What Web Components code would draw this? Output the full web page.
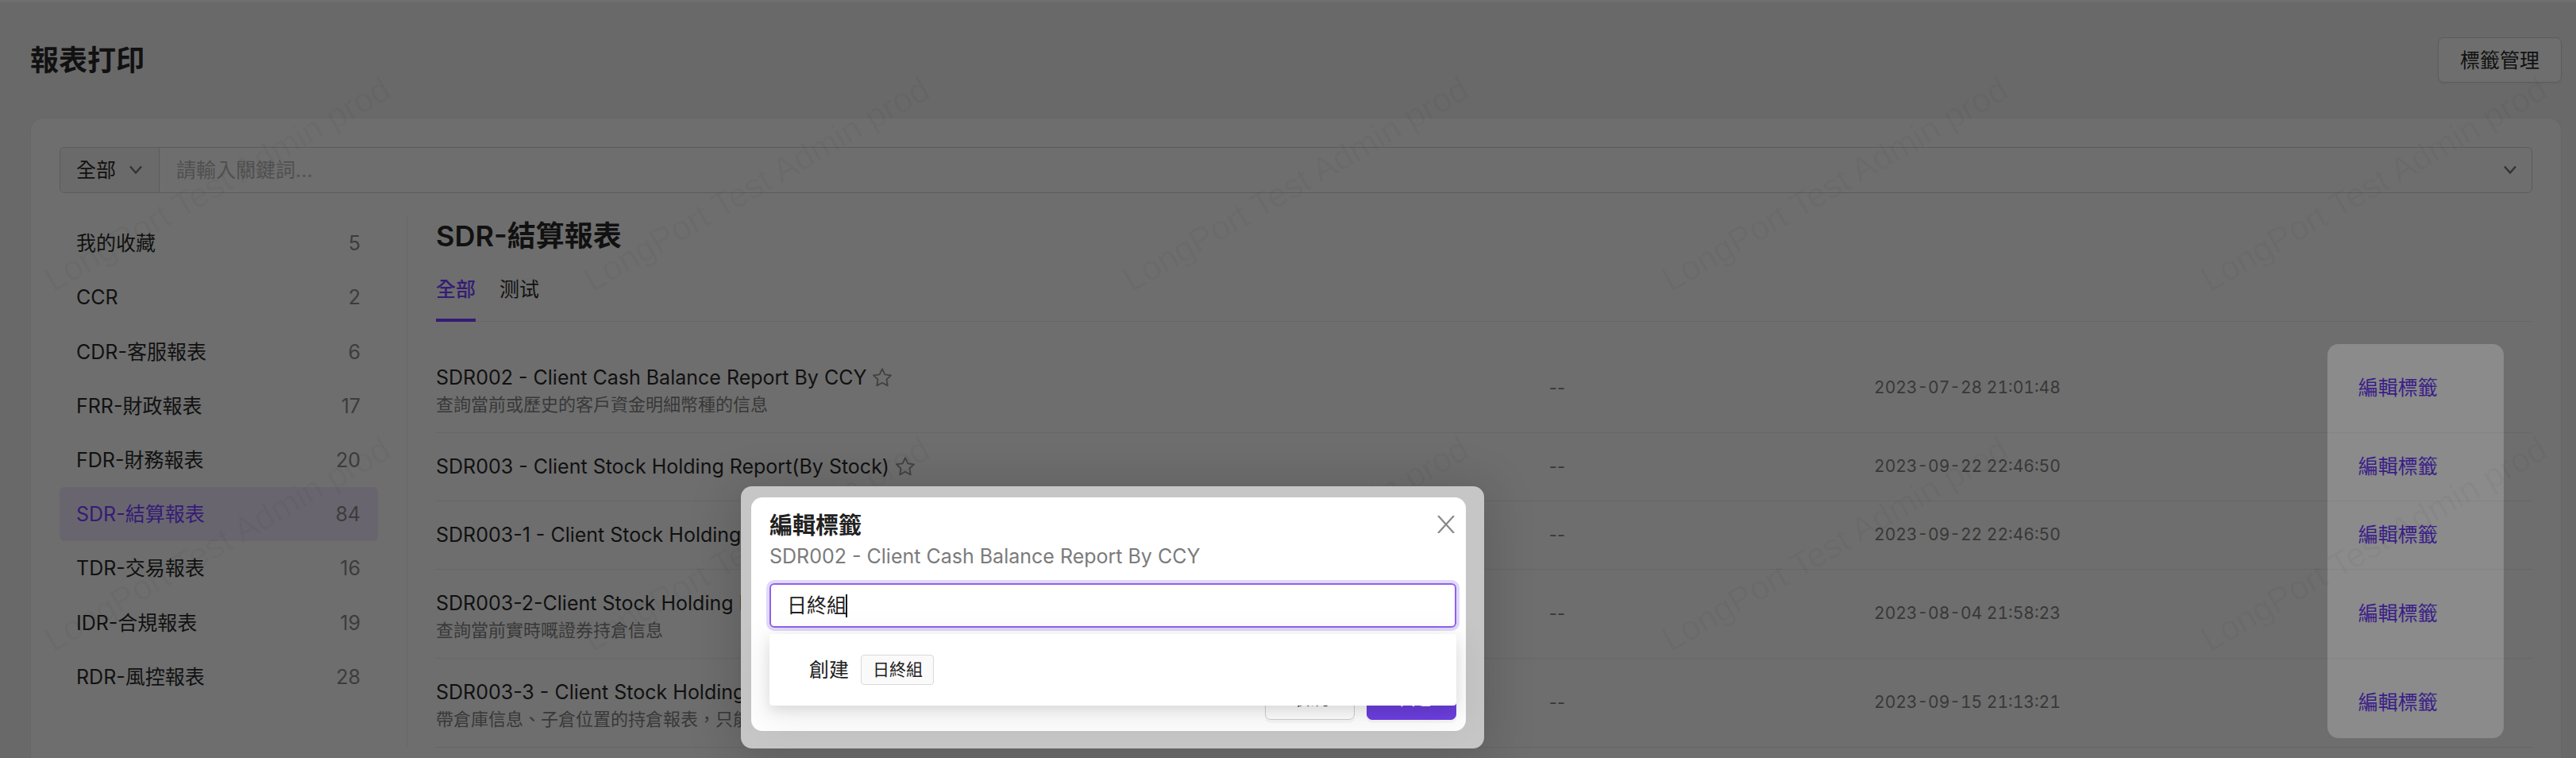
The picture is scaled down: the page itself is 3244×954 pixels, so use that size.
<!DOCTYPE html>
<html lang="zh-Hant">
<head>
<meta charset="utf-8">
<meta name="viewport" content="width=device-width, initial-scale=1">
<title>報表打印</title>
<style>
:root{
  --page:#696969; --card:#6e6e6e; --line:#666; --edge:#5b5b5b;
  --ink:#111; --muted:#383838; --hint:#505050; --brand:#341c75;
}
html,body{margin:0;height:100%}
body{font:25px/38px Inter,"Noto Sans CJK TC","Noto Sans CJK SC",sans-serif;color:var(--ink);background:var(--page);overflow:hidden}
</style>
</head>
<body>
<report-page>
  <page-header slot="header" heading="報表打印"><span slot="action">標籤管理</span></page-header>
  <search-bar slot="search"></search-bar>
  <report-menu slot="menu"></report-menu>
  <report-list slot="list" heading="SDR-結算報表"></report-list>
  <water-mark slot="overlay" text="LongPort Test Admin prod"></water-mark>
  <tag-dialog slot="overlay" heading="編輯標籤" report="SDR002 - Client Cash Balance Report By CCY"></tag-dialog>
</report-page>
<script>
const reset = `:host,*{box-sizing:border-box}button,input,select{font:inherit;color:inherit;margin:0;border:0;background:none;padding:0;outline:0}a{color:inherit;text-decoration:none}`;
const define = (name, render) => customElements.define(name, class extends HTMLElement {
  constructor(){
    super();
    this.attachShadow({mode:'open'});
  }
  connectedCallback(){
    this.shadowRoot.innerHTML = '<style>' + reset + '</style>' + render(this);
  }
});

define('report-page', () => `
<style>
:host{display:flex;flex-direction:column;position:relative;height:100vh;overflow:hidden;padding:0 18px 0 38px;border-top:3px solid #6f6f6f}
main{flex:1 0 auto;background:var(--card);border:1px solid #666;border-bottom:0;border-radius:16px 16px 0 0;padding:36px 36px 0}
.cols{display:grid;grid-template-columns:437px 1fr;margin-top:29px}
</style>
<slot name="header"></slot>
<main><slot name="search"></slot><div class="cols"><slot name="menu"></slot><slot name="list"></slot></div></main>
<slot name="overlay"></slot>`);

define('page-header', el => `
<style>
:host{display:flex;align-items:center;justify-content:space-between;height:145px;flex:none}
h1{margin:0;font-size:36px;line-height:50px;font-weight:600}
button{height:57px;padding:0 27px;border:1px solid var(--edge);border-radius:7px;background:var(--card);box-shadow:0 2px 2px rgba(0,0,0,.03)}
</style>
<h1>${el.getAttribute('heading')}</h1><button type="button"><slot name="action"></slot></button>`);

const chevron = `<svg width="18" height="12" viewBox="0 0 18 12" fill="none" stroke="#333" stroke-width="2.4" aria-hidden="true"><path d="M2 1.5 9 9.5 16 1.5"/></svg>`;

define('search-bar', () => `
<style>
:host{display:flex;height:58px;border:1px solid var(--edge);border-radius:6px;overflow:hidden}
.scope{display:flex;align-items:center;gap:16px;padding:0 20px;background:#6a6a6a;border-right:1px solid var(--edge);flex:none}
select{appearance:none;width:50px}
input{flex:1;min-width:0;padding:0 21px}
input::placeholder{color:var(--hint);opacity:1}
button{display:flex;align-items:center;padding:0 18px}
</style>
<label class="scope"><select aria-label="範圍"><option>全部</option></select>${chevron}</label>
<input type="text" aria-label="關鍵詞" placeholder="請輸入關鍵詞...">
<button type="button" aria-label="展開">${chevron}</button>`);

const groups = [['我的收藏',5],['CCR',2],['CDR-客服報表',6],['FRR-財政報表',17],['FDR-財務報表',20],['SDR-結算報表',84],['TDR-交易報表',16],['IDR-合規報表',19],['RDR-風控報表',28]];
define('report-menu', () => `
<style>
:host{display:block;padding-right:36px}
nav{display:grid;grid-auto-rows:1fr;height:614px}
a{display:flex;align-items:center;justify-content:space-between;padding:0 22px 0 21px;border-radius:6px}
a span{color:#3c3c3c}
a.on{background:#69656f;color:var(--brand)}
</style>
<nav>${groups.map(([n,c]) => `<a href="#${n}"${n.startsWith('SDR') ? ' class="on" aria-current="page"' : ''}>${n}<span>${c}</span></a>`).join('')}</nav>`);

const reports = [
  ['SDR002 - Client Cash Balance Report By CCY','查詢當前或歷史的客戶資金明細幣種的信息','2023-07-28 21:01:48'],
  ['SDR003 - Client Stock Holding Report(By Stock)','','2023-09-22 22:46:50'],
  ['SDR003-1 - Client Stock Holding','','2023-09-22 22:46:50'],
  ['SDR003-2-Client Stock Holding R','查詢當前實時嘅證券持倉信息','2023-08-04 21:58:23'],
  ['SDR003-3 - Client Stock Holding','帶倉庫信息、子倉位置的持倉報表，只能','2023-09-15 21:13:21']
];
const star = `<svg width="26" height="26" viewBox="0 0 26 26" fill="none" stroke="#414141" stroke-width="1.8" stroke-linejoin="round"><path d="M13 2.2 16.3 9.3 24 10.3 18.4 15.6 19.8 23.4 13 19.7 6.2 23.4 7.6 15.6 2 10.3 9.7 9.3Z"/></svg>`;
define('report-list', el => `
<style>
:host{display:block;border-left:1px solid var(--line);padding-left:36px}
h2{margin:0;font-size:36px;line-height:50px;font-weight:600}
.tabs{display:flex;gap:30px;height:78px;margin-top:5px;box-shadow:inset 0 -1px var(--line)}
.tabs button{border-bottom:4px solid transparent}
.tabs .on{color:var(--brand);border-color:var(--brand);font-weight:500}
.rows{position:relative;margin-top:28px}
table{width:100%;table-layout:fixed;border-collapse:separate;border-spacing:0}
.name{width:53.1%}.tag{width:15.5%}.time{width:23.1%}
td{padding:23px 0 24px;border-bottom:1px solid var(--line);vertical-align:middle;white-space:nowrap;text-align:left}
.title{display:flex;align-items:center;gap:7px;height:38px}
.star{display:flex}
.desc{height:26px;font:22px/26px "Noto Sans CJK SC",sans-serif;color:var(--muted)}
.sub{font-size:22px;line-height:30px;color:var(--muted)}
.when{font-size:21px;font-variant-numeric:tabular-nums}
td:last-child{line-height:30px}
td a{color:#3a1e88}
.mark{position:absolute;top:0;right:36px;width:222px;height:496px;border-radius:14px;background:rgba(255,255,255,.2)}
td:last-child a{position:relative;z-index:1}
</style>
<h2>${el.getAttribute('heading')}</h2>
<div class="tabs" role="tablist"><button role="tab" aria-selected="true" class="on">全部</button><button role="tab" aria-selected="false">测试</button></div>
<div class="rows"><table><colgroup><col class="name"><col class="tag"><col class="time"><col></colgroup><tbody>${reports.map(([t,d,w]) => `
<tr><td><div class="title">${t}<button class="star" type="button" aria-label="收藏">${star}</button></div>${d ? `<div class="desc">${d}</div>` : ''}</td><td class="sub">--</td><td class="sub when">${w}</td><td><a href="#edit">編輯標籤</a></td></tr>`).join('')}
</tbody></table><div class="mark"></div></div>`);

define('water-mark', el => {
  let marks = '';
  for (const y of [368, 821]) for (let i = 0; i < 5; i++) marks += `<text transform="translate(${67 + i * 679} ${y}) rotate(-30)">${el.getAttribute('text')}</text>`;
  return `
<style>
:host{position:absolute;inset:-3px 0 0 0;pointer-events:none;z-index:1}
svg{display:block;width:100%;height:100%}
text{font:43px "Liberation Sans",sans-serif;fill:rgba(0,0,0,.035)}
</style>
<svg>${marks}</svg>`;
});

define('tag-dialog', el => `
<style>
:host{position:absolute;left:933px;top:609px;width:936px;padding:14px 23px 22px 13px;background:#c6c6c6;border-radius:14px;z-index:2;box-shadow:0 8px 60px 10px rgba(0,0,0,.14)}
section{position:relative;display:flex;flex-direction:column;height:294px;padding:17px 12px 14px 23px;background:#fff;border-radius:14px;color:#222}
header{display:flex;justify-content:space-between;align-items:flex-start}
h3{margin:0;font-size:29px;line-height:38px;font-weight:600}
.close{display:flex;padding:6px 2px}
p{margin:0;color:#7b7b7b}
.box{display:flex;align-items:center;height:56px;margin-top:15px;padding:0 20px;border:2px solid #8f60ee;border-radius:6px;box-shadow:0 0 0 4px #e1d9fa}
.box input{width:74px}
.box i{width:2px;height:29px;background:#111}
.drop{position:absolute;left:23px;right:12px;top:172px;height:90px;display:flex;align-items:center;gap:15px;padding:0 50px;background:#fff;border-radius:4px;box-shadow:0 6px 16px rgba(0,0,0,.1),0 12px 44px 10px rgba(0,0,0,.06)}
.chip{height:38px;padding:0 13px 0 14px;border:1px solid #d9d9d9;border-radius:4px;background:#fafafa;font-size:21px;line-height:36px}
footer{display:flex;justify-content:flex-end;gap:15px;margin-top:auto}
footer button{width:113px;height:57px;border:1px solid #d0d0d0;border-radius:7px;box-shadow:0 4px 0 rgba(0,0,0,.03)}
footer .ok{background:#6d3fe0;border-color:#6d3fe0;color:#fff}
</style>
<section role="dialog" aria-label="${el.getAttribute('heading')}">
<header><h3>${el.getAttribute('heading')}</h3><button class="close" type="button" aria-label="關閉"><svg width="22" height="22" viewBox="0 0 22 22" stroke="#888" stroke-width="2.2"><path d="M1 0 21 22M21 0 1 22"/></svg></button></header>
<p>${el.getAttribute('report')}</p>
<div class="box"><input type="text" aria-label="標籤" value="日終組"><i></i></div>
<div class="drop">創建<span class="chip">日終組</span></div>
<footer><button type="button">取消</button><button type="button" class="ok">確定</button></footer>
</section>`);
</script>
</body>
</html>
